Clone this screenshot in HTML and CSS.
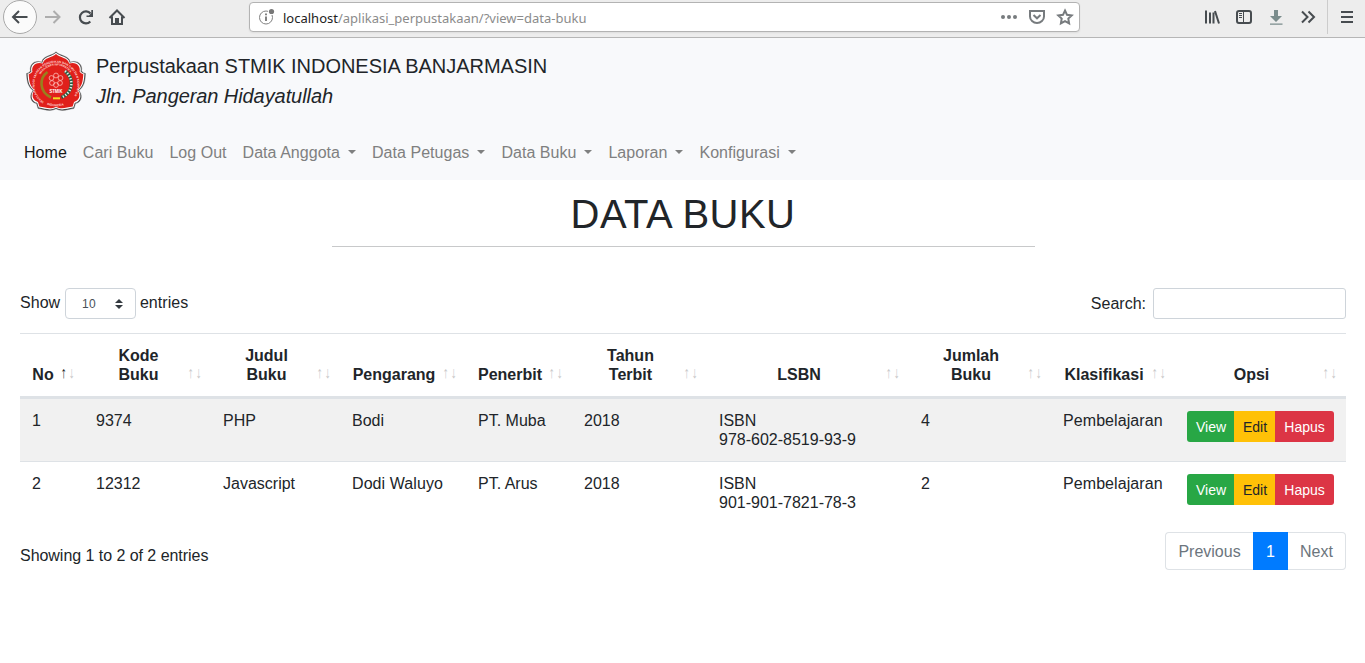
FILE: index.html
```html
<!DOCTYPE html>
<html lang="id">
<head>
<meta charset="utf-8">
<title>Data Buku</title>
<link rel="stylesheet" href="styles.css">
</head>
<body>
<div class="toolbar">
  <div class="nav-buttons">
    <span class="back"><svg width="18" height="16" viewBox="0 0 18 16" class="ink"><path d="M16.500 8H2M8 2 2 8l6 6"/></svg></span>
    <svg width="18" height="16" viewBox="0 0 18 16" class="ink faded forward"><path d="M1 8h14.500M9.500 2l6 6-6 6"/></svg>
    <svg width="18" height="18" viewBox="0 0 18 18" class="ink reload"><path class="bold" d="M13.300 13.500A6 6 0 1 1 13.500 5.500"/><path class="solid" d="M16 2v7H9.500V7.400H12L14.300 5V2z"/></svg>
    <svg width="18" height="18" viewBox="0 0 18 18" class="ink home"><path d="M1.500 10 9 2.500l7.500 7.500M4 8.500V16h10V8.500"/><path class="solid" d="M7 10h4v6H7z"/></svg>
  </div>
  <div class="urlbar">
    <svg width="18" height="18" viewBox="0 0 18 18" class="info"><circle cx="8" cy="9.500" r="6.500"/><path class="mark" d="M8 8.500v4.500M8 5.500v1.800"/><circle class="gapdot" cx="13.500" cy="3.500" r="3.600"/><circle class="dot" cx="13.500" cy="3.500" r="2.600"/></svg>
    <span class="url"><b>localhost</b>/aplikasi_perpustakaan/?view=data-buku</span>
    <svg width="18" height="16" viewBox="0 0 18 16" class="dots"><circle cx="3" cy="8" r="2"/><circle cx="9" cy="8" r="2"/><circle cx="15" cy="8" r="2"/></svg>
    <svg width="18" height="16" viewBox="0 0 18 16" class="tool pocket"><path d="M2 2h14v5.500a7 6.500 0 0 1-14 0zM5.500 6 9 9.300 12.500 6"/></svg>
    <svg width="18" height="18" viewBox="0 0 18 18" class="tool star"><path d="m9 2.500 2 4.300 4.700.6-3.400 3.200.8 4.800L9 13.100l-4.100 2.300.8-4.800-3.400-3.200 4.700-.6z"/></svg>
  </div>
  <div class="actions">
    <svg width="16" height="16" viewBox="0 0 16 16" class="ink"><path d="M2 1.500v13M6 3.500v11M9.500 3.500v11M11 2l4 12.500"/></svg>
    <svg width="16" height="16" viewBox="0 0 16 16" class="ink sidebar"><rect x="1" y="2" width="14" height="12" rx="2"/><path class="thin" d="M7.500 2v12"/><path class="thin" d="M3 4.500h3M3 6.500h3M3 8.500h3"/></svg>
    <svg width="16" height="16" viewBox="0 0 16 16" class="download"><path d="M6 1h4v6h4l-6 6-6-6h4zM2 14.500h12.500v1.300H2z"/></svg>
    <svg width="16" height="16" viewBox="0 0 16 16" class="ink more"><path d="m2 2.500 5.500 5.500L2 13.500M8.500 2.500 14 8l-5.500 5.500"/></svg>
    <span class="separator"></span>
    <svg width="14" height="16" viewBox="0 0 14 16" class="ink"><path d="M1 3h12M1 8h12M1 13h12"/></svg>
  </div>
</div>

<header class="navbar">
  <div class="brand">
    <svg class="logo" width="60" height="61" viewBox="0 0 60 61">
      <defs>
        <path id="flower" d="M15.800 11C17 4.500 26 5 30 .800 34 5 43 4.500 44.200 11 52 8.500 57 14 55.500 20Q57 22 59.500 22.500C59 30 58.500 35 53 39.500 58 46 54 52 49.500 52.500L48 57.500C41 58.500 36 61 30 57.800 24 61 19 58.500 12 57.500L10.500 52.500C6 52 2 46 7 39.500 1.500 35 1 30 .500 22.500Q3 22 4.500 20C3 14 8 8.500 15.800 11z"/>
        <path id="ring" d="M18 51A21.500 21.500 0 1 1 42 51"/>
        <path id="ring-inner" d="M14.500 23.500A17.800 17.800 0 0 1 45.500 23.500"/>
        <path id="ring-bottom" d="M21 53.800Q30 56.500 39 53.800"/>
      </defs>
      <use href="#flower" class="edge"/>
      <use href="#flower" class="gap"/>
      <use href="#flower" class="petals"/>
      <text class="seal"><textPath href="#ring" textLength="100" lengthAdjust="spacingAndGlyphs">SEKOLAH TINGGI YAYASAN PENDIDIKAN DAN ILMU DAN KOMPUTER</textPath></text>
      <text class="seal"><textPath href="#ring-inner" textLength="35" lengthAdjust="spacingAndGlyphs">MANAJEMEN INFORMATIKA</textPath></text>
      <text class="seal"><textPath href="#ring-bottom" textLength="17" lengthAdjust="spacingAndGlyphs">INDONESIA</textPath></text>
      <path class="rice" d="M21.500 21C13 27 13 41 25 46.500"/>
      <path class="cotton" d="M39 20C48 27 48 41 35.500 46.500"/>
      <path class="cotton-dots" d="M39 20C48 27 48 41 35.500 46.500"/>
      <g class="atom"><circle cx="30" cy="24.500" r="2.400"/><circle cx="34.500" cy="27" r="2.400"/><circle cx="34" cy="32" r="2.400"/><circle cx="30" cy="34" r="2.400"/><circle cx="26" cy="32" r="2.400"/><circle cx="25.500" cy="27" r="2.400"/></g>
      <text class="acronym" x="30" y="41.500" textLength="13" lengthAdjust="spacingAndGlyphs">STMIK</text>
      <path class="ribbon" d="M27 46.300h7v2h-7z"/>
    </svg>
    <div class="brand-text">Perpustakaan STMIK INDONESIA BANJARMASIN<br><i>Jln. Pangeran Hidayatullah</i></div>
  </div>
  <nav class="menu">
    <a class="active">Home</a><a>Cari Buku</a><a>Log Out</a><a class="drop">Data Anggota</a><a class="drop">Data Petugas</a><a class="drop">Data Buku</a><a class="drop">Laporan</a><a class="drop">Konfigurasi</a>
  </nav>
</header>

<main class="content">
  <h1>DATA BUKU</h1>
  <hr>
  <div class="controls">
    <div class="length"><span class="word">Show</span><span class="select">10<svg width="8" height="10" viewBox="0 0 8 10"><path d="M0 4 4 0l4 4zM0 6l4 4 4-4z"/></svg></span><span class="word">entries</span></div>
    <label class="search">Search: <input type="text"></label>
  </div>
  <table>
    <colgroup><col class="c-no"><col class="c-kode"><col class="c-judul"><col class="c-pengarang"><col class="c-penerbit"><col class="c-tahun"><col class="c-isbn"><col class="c-jumlah"><col class="c-klas"><col class="c-opsi"></colgroup>
    <thead>
      <tr><th class="asc">No</th><th>Kode<br>Buku</th><th>Judul<br>Buku</th><th>Pengarang</th><th>Penerbit</th><th>Tahun<br>Terbit</th><th>LSBN</th><th>Jumlah<br>Buku</th><th>Klasifikasi</th><th>Opsi</th></tr>
    </thead>
    <tbody>
      <tr class="odd"><td>1</td><td>9374</td><td>PHP</td><td>Bodi</td><td>PT. Muba</td><td>2018</td><td>ISBN<br>978-602-8519-93-9</td><td>4</td><td class="subject">Pembelajaran</td><td><div class="buttons"><a class="view">View</a><a class="edit">Edit</a><a class="hapus">Hapus</a></div></td></tr>
      <tr><td>2</td><td>12312</td><td>Javascript</td><td class="subject">Dodi Waluyo</td><td>PT. Arus</td><td>2018</td><td>ISBN<br>901-901-7821-78-3</td><td>2</td><td class="subject">Pembelajaran</td><td><div class="buttons"><a class="view">View</a><a class="edit">Edit</a><a class="hapus">Hapus</a></div></td></tr>
    </tbody>
  </table>
  <div class="footer">
    <div class="summary">Showing 1 to 2 of 2 entries</div>
    <div class="pagination"><a class="prev">Previous</a><a class="current">1</a><a class="next">Next</a></div>
  </div>
</main>
</body>
</html>
```
FILE: styles.css
```css
* { box-sizing: border-box; }
body { margin: 0; background: #fff; color: #212529; font: 16px/19px "Liberation Sans", Arial, sans-serif; overflow: hidden; }
svg { display: block; flex: none; }

/* Browser toolbar */
.toolbar { display: flex; height: 38px; background: #ededed; border-bottom: 1px solid #b6b6b6; }
.nav-buttons { display: flex; align-items: center; width: 249px; height: 34px; padding-left: 3px; }
.back { display: flex; align-items: center; justify-content: center; width: 34px; height: 34px; border: 1px solid #a9a9a9; border-radius: 50%; background: #fbfbfb; }
.ink { fill: none; stroke: #474c50; stroke-width: 2; }
.ink .bold { stroke-width: 2.2; }
.ink .solid { fill: #474c50; stroke: none; }
.ink .thin { stroke-width: 1; }
.faded { stroke: #adadad; }
.forward { margin-left: 7px; }
.reload { margin-left: 15px; }
.home { margin-left: 13px; }
.urlbar { display: flex; align-items: center; width: 831px; height: 30px; margin-top: 2px; padding: 0 5px 0 8px; background: #fff; border: 1px solid #b3b3b3; border-radius: 4px; box-shadow: 0 1px 2px #0001; }
.info { fill: none; stroke: #828282; }
.info .mark { stroke-width: 2; }
.info .gapdot { fill: #fff; stroke: none; }
.info .dot { fill: #777; stroke: none; }
.url { flex: 1; margin-left: 7px; font: 13px/20px "Noto Sans", sans-serif; color: #8b8b8b; padding-top: 2px; }
.url b { font-weight: 400; color: #222; }
.dots { fill: #777b7e; }
.tool { fill: none; stroke: #777b7e; stroke-width: 2; }
.pocket { margin-left: 10px; }
.star { margin-left: 10px; }
.actions { display: flex; align-items: center; height: 34px; padding-left: 124px; gap: 16px; }
.download { fill: #7a8c8c; }
.separator { width: 1px; height: 34px; margin: 0 -4px 0 -5px; background: #ccc; }

/* Site header */
.navbar { height: 142px; padding: 8px 16px; background: #f8f9fb; }
.brand { display: flex; height: 70px; padding: 5px 0 0 10px; }
.brand-text { margin-left: 10px; font-size: 20px; line-height: 30px; letter-spacing: -.03px; }
.brand-text i { letter-spacing: -.08px; }
.menu { display: flex; margin-top: 19px; }
.menu a { padding: 8px; color: #7f8080; letter-spacing: .036px; }
.menu .active { color: #181919; }
.drop::after { content: ""; display: inline-block; margin-left: 8px; vertical-align: 4px; border: 4.8px solid transparent; border-top-color: currentColor; border-bottom: 0; }

/* Emblem */
.edge { fill: #444; stroke: #666; stroke-width: .4; }
.gap { fill: #fff; transform: translate(30px, 31px) scale(.965) translate(-30px, -31px); }
.petals { fill: #e0201b; transform: translate(30px, 31px) scale(.925) translate(-30px, -31px); }
.seal { font-size: 3px; font-weight: 700; fill: #ffd8d3; }
.rice { fill: none; stroke: #98801e; stroke-width: 2.6; }
.cotton { fill: none; stroke: #235e43; stroke-width: 3.2; }
.cotton-dots { fill: none; stroke: #e9efe8; stroke-width: 2.5; stroke-dasharray: 1.3 1.7; }
.atom { fill: none; stroke: #ffd0ca; stroke-width: .7; }
.acronym { font-size: 4.5px; font-weight: 700; fill: #fff; text-anchor: middle; }
.ribbon { fill: #f3dd22; }

/* Page body */
.content { padding: 10px 19px 0 20px; }
h1 { margin: 0; font-size: 40px; font-weight: 400; line-height: 48px; letter-spacing: .45px; text-align: center; }
hr { width: 703px; height: 1px; margin: 8px auto 41px; border: 0; background: #c8c9ca; }
.controls { display: flex; justify-content: space-between; height: 45px; }
.length, .search { display: flex; align-items: center; height: 31px; }
.word { padding-bottom: 2px; letter-spacing: .05px; }
.select { display: flex; align-items: center; justify-content: space-between; width: 71px; height: 31px; margin: 0 4px 0 4.700px; padding: 1px 12px 0 16px; border: 1px solid #ced4da; border-radius: 4px; font-size: 12px; letter-spacing: .4px; color: #495057; }
.select svg { fill: #343a40; }
.search input { width: 193px; height: 31px; margin-left: 7px; border: 1px solid #ced4da; border-radius: 3px; }
table { width: 1326px; table-layout: fixed; border-collapse: separate; border-spacing: 0; }
.c-no { width: 64px; }
.c-kode { width: 127px; }
.c-judul { width: 129px; }
.c-pengarang { width: 126px; }
.c-penerbit { width: 106px; }
.c-tahun { width: 135px; }
.c-isbn { width: 202px; }
.c-jumlah { width: 142px; }
.c-klas { width: 124px; }
.c-opsi { width: 171px; }
th { position: relative; padding: 12px 30px 12px 12px; border-top: 1px solid #dee2e6; border-bottom: 2px solid #dee2e6; vertical-align: bottom; white-space: nowrap; }
th::before, th::after { position: absolute; bottom: 14px; width: 8px; color: #c8c9ca; font-weight: 400; text-indent: -4px; transform: scaleX(.75); }
th::before { content: "\2191"; right: 15px; }
th::after { content: "\2193"; right: 7px; }
th.asc::before { color: #212529; }
td { height: 63px; padding: 12px 12px; border-top: 1px solid #dee2e6; vertical-align: top; white-space: nowrap; }
.odd td { background: #f1f1f1; }
.subject { letter-spacing: .08px; }
.buttons { display: flex; height: 31px; font-size: 14px; line-height: 32px; text-align: center; color: #fff; }
.view { width: 47px; padding-left: 1px; background: #28a745; border-radius: 3px 0 0 3px; }
.edit { width: 41px; padding-left: 1px; background: #ffc107; color: #212529; }
.hapus { width: 59px; background: #dc3545; border-radius: 0 3px 3px 0; }
.footer { display: flex; justify-content: space-between; padding-top: 8px; }
.summary { padding-top: 14px; letter-spacing: -.04px; }
.pagination { display: flex; height: 38px; line-height: 37px; text-align: center; color: #6c757d; }
.pagination a { border: 1px solid #dee2e6; }
.pagination .prev { width: 88px; border-right: 0; border-radius: 4px 0 0 4px; }
.pagination .current { width: 35px; background: #007bff; border-color: #007bff; color: #fff; }
.pagination .next { width: 58px; border-left: 0; border-radius: 0 4px 4px 0; }
```
